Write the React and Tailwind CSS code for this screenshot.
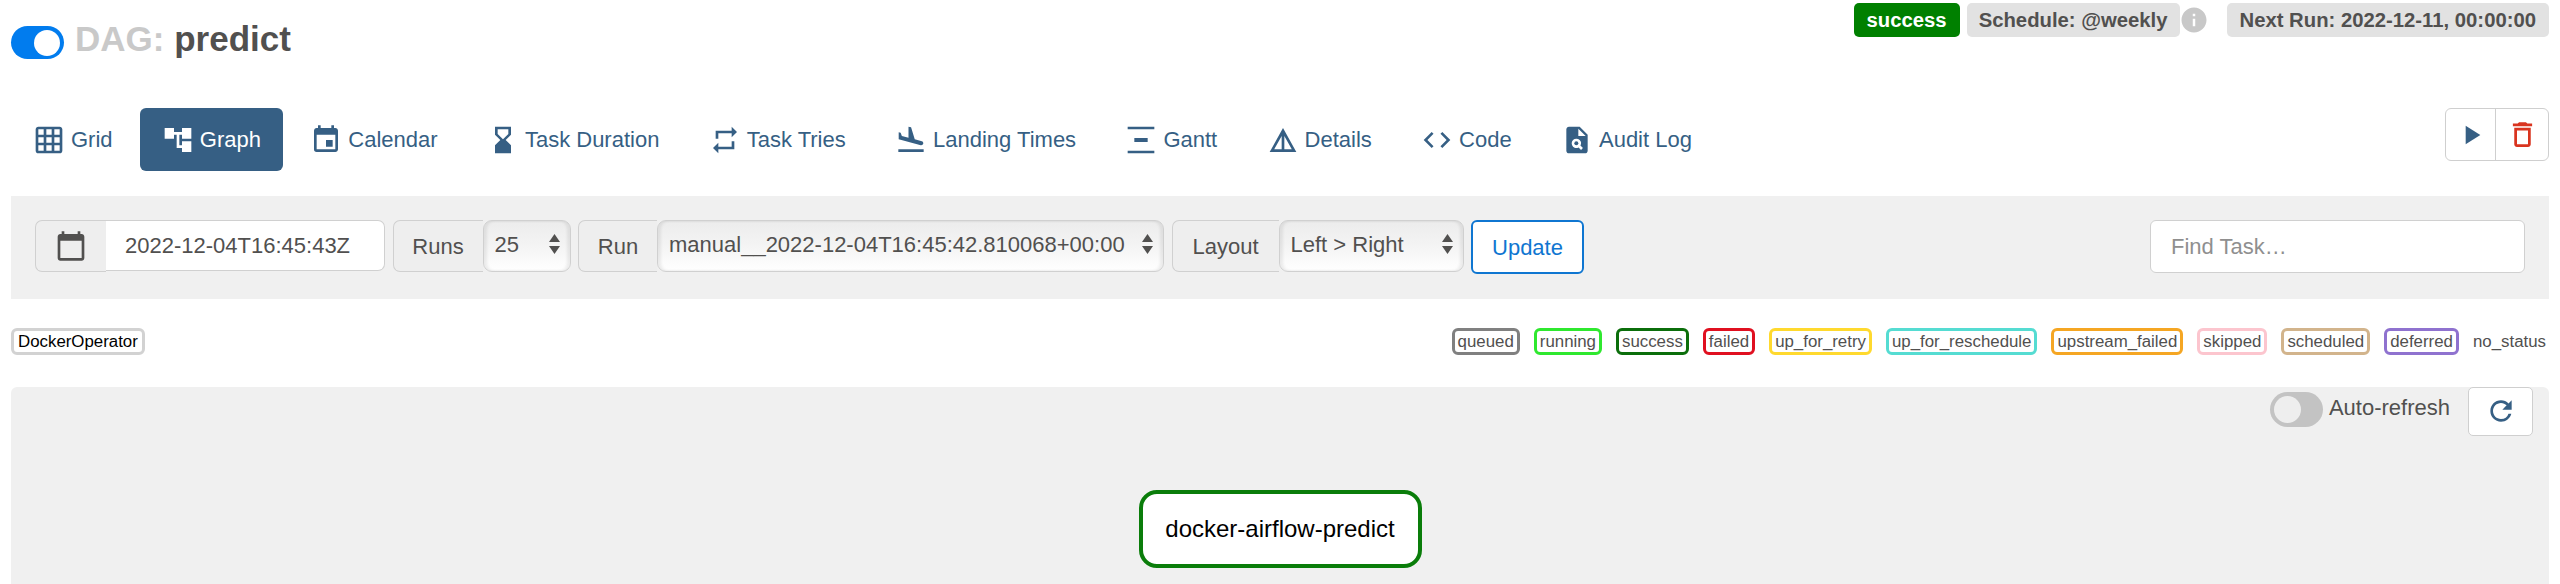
import React from "react";
import {
  MdGridOn, MdAccountTree, MdEvent, MdHourglassBottom, MdRepeat, MdFlightLand,
  MdVerticalDistribute, MdDetails, MdCode, MdPlagiarism, MdPlayArrow, MdDeleteOutline,
  MdRefresh, MdCalendarToday, MdInfo,
} from "react-icons/md";

const nav = [
  ["Grid", MdGridOn],
  ["Graph", MdAccountTree, true],
  ["Calendar", MdEvent],
  ["Task Duration", MdHourglassBottom],
  ["Task Tries", MdRepeat],
  ["Landing Times", MdFlightLand],
  ["Gantt", MdVerticalDistribute],
  ["Details", MdDetails],
  ["Code", MdCode],
  ["Audit Log", MdPlagiarism],
];

const states = [
  ["queued", "border-[#808080]"],
  ["running", "border-[#2fe82f]"],
  ["success", "border-[#0b6e0b]"],
  ["failed", "border-[#e01020]"],
  ["up_for_retry", "border-[#ffd92e]"],
  ["up_for_reschedule", "border-[#55dcd2]"],
  ["upstream_failed", "border-[#f5a623]"],
  ["skipped", "border-[#fcc5ce]"],
  ["scheduled", "border-[#d2b48c]"],
  ["deferred", "border-[#8f72cf]"],
];

function Label({ children, className }) {
  return (
    <span className={`flex h-[52px] items-center justify-center rounded-l-[7px] border-[1.5px] border-r-0 border-[#d0d0d0] bg-[#eeeeee] text-[22px] text-[#51504f] ${className}`}>
      {children}
    </span>
  );
}

function Select({ value, className }) {
  return (
    <div className={`relative h-[52px] ${className}`}>
      <select
        defaultValue={value}
        className="h-full w-full appearance-none rounded-[9px] border-[1.5px] border-[#d0d0d0] bg-linear-to-b from-[#ececec] via-[#f4f4f4] to-white pb-[3px] pl-[11px] text-[22px] text-[#51504f] shadow-[inset_3px_0_3px_rgba(0,0,0,0.07),inset_-3px_0_3px_rgba(0,0,0,0.07)] outline-none"
      >
        <option>{value}</option>
      </select>
      <svg className="pointer-events-none absolute top-[14px] right-[11px]" width="11" height="20" viewBox="0 0 11 20" fill="#51504f">
        <path d="M5.5 0 11 8H0z" />
        <path d="M0 12h11l-5.500 8z" />
      </svg>
    </div>
  );
}

export default function App() {
  return (
    <div className="h-[584px] overflow-hidden bg-white px-[11px] font-['Liberation_Sans',Arial,sans-serif] text-[#51504f]">
      <header className="flex h-[60px] items-start justify-between">
        <div className="mt-[18px] flex items-center">
          <span className="mt-[8px] flex h-[33px] w-[53px] items-center justify-end rounded-full bg-[#017cee] pr-[4px]">
            <span className="h-[26px] w-[26px] rounded-full bg-white" />
          </span>
          <h1 className="ml-[11px] text-[35px] leading-[40px] font-bold">
            <span className="text-[#c9c9c9]">DAG:</span> predict
          </h1>
        </div>
        <div className="mt-[3px] flex items-center text-[20.3px] font-bold">
          <span className="flex h-[34px] items-center rounded-[5px] bg-[#008000] px-[13px] text-white">success</span>
          <span className="ml-[7px] flex h-[34px] items-center rounded-[5px] bg-[#e2e2e2] px-[12px]">Schedule: @weekly</span>
          <MdInfo size={30} className="ml-[-1px] text-[#c8c8c8]" />
          <span className="ml-[18px] flex h-[34px] items-center rounded-[5px] bg-[#e2e2e2] px-[13px]">Next Run: 2022-12-11, 00:00:00</span>
        </div>
      </header>

      <div className="mt-[48px] flex h-[63px] items-start justify-between">
        <nav className="flex gap-[5.3px]">
          {nav.map(([label, Icon, active]) => (
            <a
              key={label}
              className={`flex h-[63px] items-center gap-[6px] rounded-[6px] px-[22px] text-[22px] ${active ? "bg-[#365f84] text-white" : "text-[#365f84]"}`}
            >
              <Icon size={32} />
              {label}
            </a>
          ))}
        </nav>
        <div className="flex h-[53px] w-[104px] overflow-hidden rounded-[6px] border-[1.5px] border-[#cfcfcf]">
          <span className="flex flex-1 items-center justify-center border-r-[1.5px] border-[#cfcfcf] text-[#365f84]">
            <MdPlayArrow size={32} />
          </span>
          <span className="flex w-[52px] items-center justify-center text-[#d9341f]">
            <MdDeleteOutline size={33} />
          </span>
        </div>
      </div>

      <div className="mt-[25px] flex h-[103px] items-start justify-between bg-[#f0f0f0] px-[24px] pt-[24px]">
        <div className="flex items-start gap-[7.5px]">
          <div className="flex">
            <Label className="w-[71px]">
              <MdCalendarToday size={32} className="text-[#51504f]" />
            </Label>
            <span className="flex h-[51px] w-[279px] items-center rounded-r-[7px] border-[1.5px] border-l-0 border-[#d0d0d0] bg-white pl-[19px] text-[22px]">
              2022-12-04T16:45:43Z
            </span>
          </div>
          <div className="flex">
            <Label className="w-[90px]">Runs</Label>
            <Select value="25" className="w-[88px]" />
          </div>
          <div className="flex">
            <Label className="w-[79px]">Run</Label>
            <Select value="manual__2022-12-04T16:45:42.810068+00:00" className="w-[507px]" />
          </div>
          <div className="flex">
            <Label className="w-[107px]">Layout</Label>
            <Select value="Left > Right" className="w-[185px]" />
          </div>
          <button className="h-[54px] w-[113px] rounded-[6px] border-2 border-[#0f76d1] bg-white text-[22px] text-[#0f76d1]">
            Update
          </button>
        </div>
        <input
          placeholder="Find Task…"
          className="h-[53px] w-[375px] rounded-[6px] border-[1.5px] border-[#d0d0d0] bg-white pl-[20px] text-[22px] outline-none placeholder:text-[#8f8f8f]"
        />
      </div>

      <div className="mt-[29px] flex h-[27px] items-center justify-between text-[16.85px]">
        <span className="flex h-[27px] items-center rounded-[6px] border-[3px] border-[#d2d2d2] px-[4px] text-black">DockerOperator</span>
        <div className="flex items-center gap-[14px]">
          {states.map(([s, c]) => (
            <span key={s} className={`flex h-[27px] items-center rounded-[6px] border-[3px] bg-white px-[3px] ${c}`}>{s}</span>
          ))}
          <span className="pr-[3px]">no_status</span>
        </div>
      </div>

      <section className="mt-[32px] h-[197px] rounded-t-[6px] bg-[#f0f0f0]">
        <div className="flex items-start justify-end pr-[16px]">
          <span className="mt-[5px] flex h-[35px] w-[53px] items-center rounded-full bg-[#c3c3c3] pl-[4px]">
            <span className="h-[27px] w-[27px] rounded-full bg-[#eeeeee]" />
          </span>
          <span className="ml-[6px] mt-[8px] text-[22px] leading-[26px]">Auto-refresh</span>
          <span className="ml-[18px] flex h-[49px] w-[65px] items-center justify-center rounded-[5px] border-[1.5px] border-[#cfcfcf] bg-white pb-[2px] text-[#365f84]">
            <MdRefresh size={32} />
          </span>
        </div>
        <div className="mt-[54px] flex justify-center">
          <div className="flex h-[78px] w-[283px] items-center justify-center rounded-[18px] border-[4px] border-[#0a7d0a] bg-white text-[24px] text-black">
            docker-airflow-predict
          </div>
        </div>
      </section>
    </div>
  );
}
